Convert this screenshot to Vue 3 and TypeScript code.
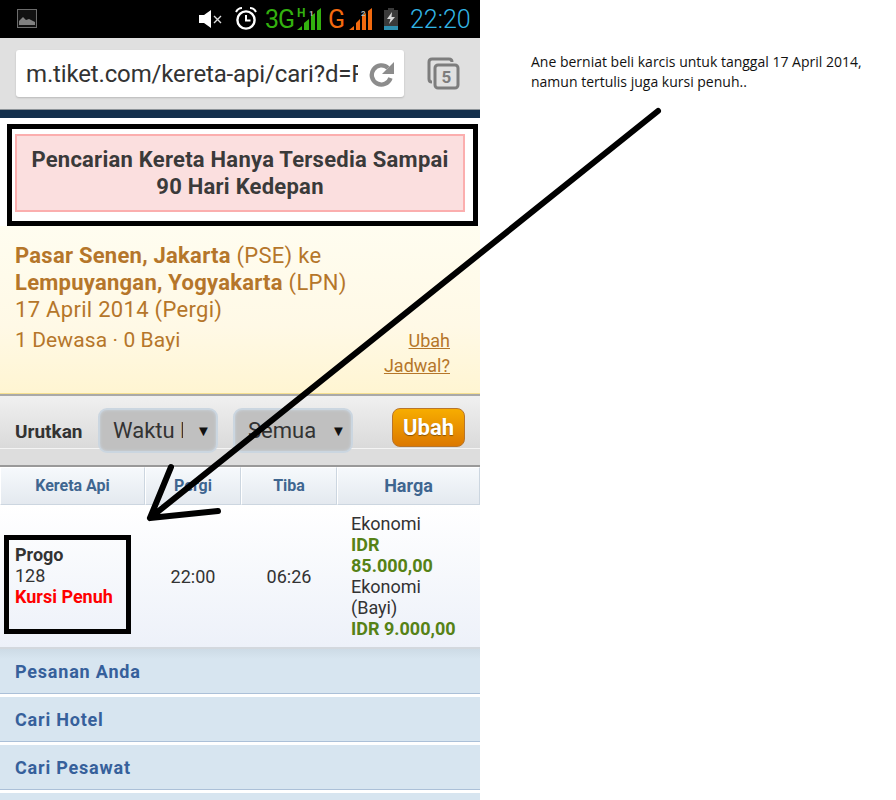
<template>
  <div class="page">
    <div class="phone">
      <div class="status">
        <svg class="st-img" width="20" height="20" viewBox="0 0 20 20">
          <rect x="0.5" y="0.5" width="19" height="18" fill="#111" stroke="#6c6c6c" />
          <path d="M2 16 V12 L6 8 L9 11 L12 10 L14 11 L18 13 V16 Z" fill="#808080" />
        </svg>
        <svg class="st-mute" width="23" height="20" viewBox="0 0 23 20">
          <path d="M0 6 H5 L12 1 V19 L5 14 H0 Z" fill="#fff" />
          <path d="M15 7 L22 14 M22 7 L15 14" stroke="#ddd" stroke-width="1.4" />
        </svg>
        <svg class="st-alarm" width="22" height="24" viewBox="0 0 22 24">
          <circle cx="11" cy="13" r="8.6" fill="none" stroke="#fff" stroke-width="2.4" />
          <path d="M11 8 V13.5 H15.5" fill="none" stroke="#fff" stroke-width="2" />
          <path d="M1 5 Q3 1 7 1 M15 1 Q19 1 21 5" fill="none" stroke="#fff" stroke-width="2" />
        </svg>
        <span class="st-3g">3G</span>
        <svg class="st-bars" width="25" height="24" viewBox="0 0 25 24">
          <path d="M0 23 L5 19 V23 Z M7 23 V16 L12 12 V23 Z M14 23 V9 L18 6 V23 Z M20 23 V4 L24 1 V23 Z" fill="#33b10f" />
          <text x="0" y="10" class="st-h">H</text>
          <text x="12" y="9" class="st-n">1</text>
        </svg>
        <span class="st-g">G</span>
        <svg class="st-bars2" width="24" height="24" viewBox="0 0 24 24">
          <path d="M0 23 L5 19 V23 Z M7 23 V16 L11 12 V23 Z M13 23 V9 L17 6 V23 Z M19 23 V4 L23 1 V23 Z" fill="#f26a0f" />
          <text x="12" y="9" class="st-n">2</text>
        </svg>
        <svg class="st-batt" width="16" height="24" viewBox="0 0 16 24">
          <path d="M5 1 H11 V3 H15 V23 H1 V3 H5 Z" fill="#3a3a3a" />
          <rect x="1" y="19" width="14" height="4" fill="#2f8fb0" />
          <path d="M9 5 L4 12 H7.5 L6 17 L12 10 H8.5 Z" fill="#d8d8d8" />
        </svg>
        <span class="st-time">22:20</span>
      </div>

      <div class="urlbar">
        <div class="urlbox">
          <span class="url">m.tiket.com/kereta-api/cari?d=P</span>
          <svg class="reload" width="26" height="26" viewBox="0 0 26 26">
            <path d="M21.5 17 A9.6 9.6 0 1 1 19 7" fill="none" stroke="#8c8c8c" stroke-width="4.4" />
            <path d="M25 1 V13 H13 Z" fill="#8c8c8c" />
          </svg>
        </div>
        <svg class="tabs" width="33" height="33" viewBox="0 0 33 33">
          <path d="M5 25 Q2 25 2 22 V5 Q2 2 5 2 H22 Q25 2 25 5" fill="none" stroke="#7d7d7d" stroke-width="3" />
          <rect x="8" y="8" width="23" height="23" rx="3" fill="#e0e0e0" stroke="#7d7d7d" stroke-width="3" />
          <text x="19.5" y="26" text-anchor="middle" class="tabs-n">5</text>
        </svg>
      </div>
      <div class="darkbar"></div>

      <div class="alert-wrap">
        <div class="alert">Pencarian Kereta Hanya Tersedia Sampai<br />90 Hari Kedepan</div>
      </div>

      <div class="summary">
        <div class="route"><b>Pasar Senen, Jakarta</b> (PSE) ke</div>
        <div class="route"><b>Lempuyangan, Yogyakarta</b> (LPN)</div>
        <div class="route">17 April 2014 (Pergi)</div>
        <div class="pax-row">
          <span class="pax">1 Dewasa · 0 Bayi</span>
          <a class="change">Ubah<br />Jadwal?</a>
        </div>
      </div>

      <div class="sortbar">
        <div class="sort-top">
          <span class="sort-label">Urutkan</span>
          <div class="select"><span class="select-text">Waktu H</span><span class="caret">▼</span></div>
          <div class="select"><span class="select-text">Semua</span><span class="caret">▼</span></div>
          <button class="btn">Ubah</button>
        </div>
      </div>

      <div class="thead">
        <div class="th th-sm">Kereta Api</div>
        <div class="th th-sm">Pergi</div>
        <div class="th th-sm">Tiba</div>
        <div class="th">Harga</div>
      </div>
      <div class="trow">
        <div class="train">
          <b>Progo</b><br />128<br /><b class="full">Kursi Penuh</b>
        </div>
        <div class="time">22:00</div>
        <div class="time">06:26</div>
        <div class="price">
          <div v-for="p in prices" :key="p.name">
            {{ p.name }}<br /><b class="idr">{{ p.value }}</b>
          </div>
        </div>
      </div>

      <div class="menu">
        <div v-for="m in menu" :key="m" class="menu-item">{{ m }}</div>
      </div>
    </div>

    <div class="note">
      Ane berniat beli karcis untuk tanggal 17 April 2014,<br />
      namun tertulis juga kursi penuh..
    </div>

    <!-- coretan di atas screenshot -->
    <svg class="marks" width="896" height="800" viewBox="0 0 896 800">
      <rect x="9.5" y="126.5" width="466" height="97" fill="none" stroke="#000" stroke-width="5" />
      <rect x="6.5" y="537.5" width="122" height="94" fill="none" stroke="#000" stroke-width="5" />
      <path d="M658 111 L150 518 M171 467 L150 518 L218 511" fill="none" stroke="#000" stroke-width="6" stroke-linecap="round" stroke-linejoin="round" />
    </svg>
  </div>
</template>

<script setup lang="ts">
const prices = [
  { name: 'Ekonomi', value: 'IDR 85.000,00' },
  { name: 'Ekonomi (Bayi)', value: 'IDR 9.000,00' }
]

const menu = ['Pesanan Anda', 'Cari Hotel', 'Cari Pesawat', '']
</script>

<style>
html,
body {
  margin: 0;
  background: #fff;
}
</style>

<style scoped>
.page {
  position: relative;
  width: 896px;
  height: 800px;
  overflow: hidden;
  display: flex;
  background: #fff;
  font-family: Roboto, sans-serif;
}

.phone {
  width: 480px;
  height: 800px;
  flex: none;
  overflow: hidden;
  color: #333;
}

.status {
  height: 38px;
  background: #000;
  display: flex;
  align-items: center;
}

.st-img { margin-left: 17px; }
.st-mute { margin-left: 162px; }
.st-alarm { margin-left: 13px; }
.st-3g {
  margin-left: 8px;
  width: 30px;
  font-size: 25px;
  color: #33b10f;
  letter-spacing: -1px;
}
.st-bars { margin-left: 2px; }
.st-h {
  font: 700 12px Roboto, sans-serif;
  fill: #33b10f;
}
.st-n {
  font: 700 8px Roboto, sans-serif;
  fill: #bbb;
}
.st-g {
  margin-left: 6px;
  width: 20px;
  font-size: 25px;
  color: #f26a0f;
}
.st-bars2 { margin-left: 1px; }
.st-batt { margin-left: 10px; }
.st-time {
  margin-left: 11px;
  font-size: 25px;
  font-weight: 300;
  color: #33b5e5;
}

.urlbar {
  height: 71px;
  background: #e0e0e0;
  border-bottom: 1px solid #8e9499;
  display: flex;
  align-items: flex-start;
  box-sizing: content-box;
}

.urlbox {
  width: 378px;
  height: 47px;
  margin: 12px 0 0 16px;
  padding-left: 10px;
  background: #fff;
  border-radius: 3px;
  box-shadow: 0 1px 2px rgba(0, 0, 0, 0.18);
  display: flex;
  align-items: center;
  flex: none;
}

.url {
  width: 332px;
  overflow: hidden;
  white-space: nowrap;
  font-size: 24px;
  letter-spacing: -0.15px;
  color: #333;
}

.reload { margin-left: 11px; flex: none; }

.tabs { margin: 19px 0 0 23px; }
.tabs-n {
  font: 700 17px Roboto, sans-serif;
  fill: #7d7d7d;
}

.darkbar {
  height: 8px;
  background: #132f4c;
}

.alert-wrap {
  height: 108px;
  padding: 16px 15px 0;
  box-sizing: border-box;
  background: #fff;
}

.alert {
  height: 78px;
  box-sizing: border-box;
  padding-top: 10px;
  background: #fbdfdf;
  border: 2px solid #fbaeae;
  text-align: center;
  font-size: 22px;
  font-weight: 700;
  line-height: 27px;
  letter-spacing: 0.25px;
  color: #3a3a3a;
}

.summary {
  height: 168px;
  box-sizing: border-box;
  padding: 16px 30px 0 15px;
  background: linear-gradient(#fffdf0, #fff9e6 60%, #fff5d2);
  border-bottom: 1px solid #f5df90;
  color: #b5762a;
}

.route {
  font-size: 22px;
  line-height: 27px;
  letter-spacing: 0.3px;
}

.route b {
  font-weight: 700;
  letter-spacing: 0.25px;
}

.pax-row {
  margin-top: 4px;
  display: flex;
  justify-content: space-between;
}

.pax {
  font-size: 21px;
  line-height: 27px;
  letter-spacing: 0.1px;
}

.change {
  margin-top: 1px;
  text-align: right;
  font-size: 18px;
  line-height: 25px;
  text-decoration: underline;
}

.sortbar {
  height: 73px;
  box-sizing: border-box;
  border-top: 2px solid #a9a9a9;
  border-bottom: 2px solid #999;
  background: #ddd;
}

.sort-top {
  height: 53px;
  box-sizing: border-box;
  padding: 12px 15px 0;
  background: linear-gradient(#f0f0f0, #dadada);
  border-bottom: 1px solid #f4f4f4;
  display: flex;
  align-items: flex-start;
}

.sort-label {
  width: 83px;
  margin-top: 12px;
  font-size: 19px;
  font-weight: 700;
  color: #333;
}

.select {
  width: 120px;
  height: 45px;
  box-sizing: border-box;
  margin-right: 15px;
  padding-left: 13px;
  background: #c0c0c0;
  border: 2px solid #cbd6e0;
  border-radius: 9px;
  box-shadow: inset 0 0 3px #cbd6e0;
  display: flex;
  align-items: center;
  font-size: 22px;
  color: #333;
}

.select-text {
  width: 70px;
  overflow: hidden;
  white-space: nowrap;
}

.caret {
  margin-left: 13px;
  font-size: 15px;
  color: #111;
}

.btn {
  width: 73px;
  height: 39px;
  margin-left: 24px;
  padding: 0;
  background: linear-gradient(#f7ad00, #dc7800);
  border: 1px solid #b8752a;
  border-radius: 8px;
  font-family: Roboto, sans-serif;
  font-size: 22px;
  font-weight: 700;
  color: #fff;
  text-shadow: 0 1px 1px rgba(0, 0, 0, 0.4);
}

.thead,
.trow {
  display: grid;
  grid-template-columns: 145px 96px 96px 143px;
}

.thead {
  height: 38px;
}

.th {
  box-sizing: border-box;
  background: linear-gradient(#f6f9fc, #e4e9ef);
  border: 1px solid #fff;
  border-bottom: 1px solid #ccd6e0;
  border-right: 1px solid #ccd6e0;
  text-align: center;
  line-height: 36px;
  font-size: 18px;
  font-weight: 700;
  color: #3f6690;
}

.th-sm {
  font-size: 16px;
}

.trow {
  height: 144px;
  box-sizing: border-box;
  background: linear-gradient(#fff, #edf1f9);
  border-bottom: 2px solid #d3d8de;
  font-size: 18px;
  line-height: 21px;
  color: #333;
}

.train {
  padding: 39px 0 0 15px;
}

.full {
  color: #f00;
}

.time {
  text-align: center;
  align-self: center;
}

.price {
  padding: 8px 20px 0 14px;
}

.idr {
  color: #568216;
}

.menu-item {
  height: 48px;
  box-sizing: border-box;
  padding-left: 15px;
  background: #d7e5f0;
  box-shadow: inset 0 -1px 0 #abc0d8;
  border-bottom: 3px solid #fff;
  line-height: 45px;
  font-size: 18px;
  font-weight: 700;
  letter-spacing: 0.8px;
  color: #36609b;
}

.menu-item:first-child {
  background: linear-gradient(#cddbe6, #d7e5f0 10px);
}

.note {
  margin: 52px 0 0 51px;
  font-family: "Open Sans", sans-serif;
  font-size: 14px;
  line-height: 20px;
  color: #111;
  white-space: nowrap;
}

.marks {
  position: absolute;
  top: 0;
  left: 0;
  pointer-events: none;
}
</style>
